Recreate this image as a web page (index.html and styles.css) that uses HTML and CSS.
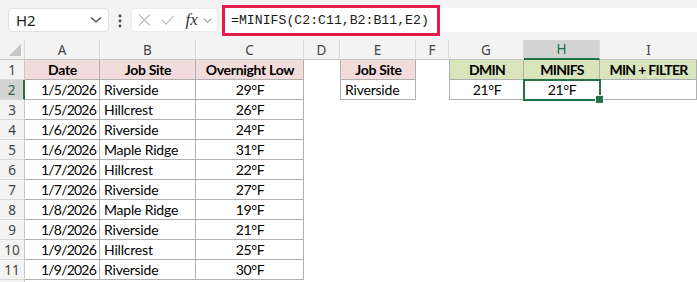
FILE: index.html
```html
<!doctype html>
<html>
    <head>
        <meta charset="utf-8" />
        <title>MINIFS</title>
        <link rel="stylesheet" href="styles.css">
    </head>
    <body>
        <div id="toolbar">
            <div class="namebox">
                <span>H2</span>
                <svg width="12" height="8" viewBox="0 0 12 8"><path d="M1 1.5 L6 6 L11 1.5" fill="none" stroke="#444" stroke-width="1.3"/></svg>
            </div>
            <div class="dots">
                <svg width="4" height="14" viewBox="0 0 4 14"><circle cx="2" cy="2" r="1.4" fill="#444"/><circle cx="2" cy="7" r="1.4" fill="#444"/><circle cx="2" cy="12" r="1.4" fill="#444"/></svg>
            </div>
            <div class="fxbox">
                <svg width="14" height="14" viewBox="0 0 14 14"><path d="M1 1 L13 13 M13 1 L1 13" stroke="#bdbdbd" stroke-width="1.3"/></svg>
                <svg width="15" height="12" viewBox="0 0 15 12"><path d="M1 6 L5.5 10.5 L14 1.5" fill="none" stroke="#bdbdbd" stroke-width="1.3"/></svg>
                <span class="fx">fx</span>
                <svg width="10" height="7" viewBox="0 0 10 7"><path d="M1 1.5 L5 5.5 L9 1.5" fill="none" stroke="#999" stroke-width="1.2"/></svg>
            </div>
            <div class="formula">
                <div class="formula-input">=MINIFS(C2:C11,B2:B11,E2)</div>
                <div class="formula-rest"></div>
            </div>
        </div>

        <div id="sheet">
            <div class="ch corner"></div>
            <div class="ch">A</div>
            <div class="ch">B</div>
            <div class="ch">C</div>
            <div class="ch">D</div>
            <div class="ch">E</div>
            <div class="ch">F</div>
            <div class="ch">G</div>
            <div class="ch sel">H</div>
            <div class="ch last">I</div>

            <div class="rh">1</div>
            <div class="c bd hd pink">Date</div>
            <div class="c bd hd pink">Job Site</div>
            <div class="c bd hd pink">Overnight Low</div>
            <div class="c"></div>
            <div class="c bd bl hd pink">Job Site</div>
            <div class="c"></div>
            <div class="c bd bl hd caps green">DMIN</div>
            <div class="c bd hd caps green">MINIFS</div>
            <div class="c bd hd caps green">MIN + FILTER</div>

            <div class="rh sel">2</div>
            <div class="c bd r">1/5/2026</div>
            <div class="c bd">Riverside</div>
            <div class="c bd m">29°F</div>
            <div class="c"></div>
            <div class="c bd bl">Riverside</div>
            <div class="c"></div>
            <div class="c bd bl m">21°F</div>
            <div class="c bd m active">21°F</div>
            <div class="c bd"></div>

            <div class="rh">3</div>
            <div class="c bd r">1/5/2026</div>
            <div class="c bd">Hillcrest</div>
            <div class="c bd m">26°F</div>
            <div class="c rest"></div>

            <div class="rh">4</div>
            <div class="c bd r">1/6/2026</div>
            <div class="c bd">Riverside</div>
            <div class="c bd m">24°F</div>
            <div class="c rest"></div>

            <div class="rh">5</div>
            <div class="c bd r">1/6/2026</div>
            <div class="c bd">Maple Ridge</div>
            <div class="c bd m">31°F</div>
            <div class="c rest"></div>

            <div class="rh">6</div>
            <div class="c bd r">1/7/2026</div>
            <div class="c bd">Hillcrest</div>
            <div class="c bd m">22°F</div>
            <div class="c rest"></div>

            <div class="rh">7</div>
            <div class="c bd r">1/7/2026</div>
            <div class="c bd">Riverside</div>
            <div class="c bd m">27°F</div>
            <div class="c rest"></div>

            <div class="rh">8</div>
            <div class="c bd r">1/8/2026</div>
            <div class="c bd">Maple Ridge</div>
            <div class="c bd m">19°F</div>
            <div class="c rest"></div>

            <div class="rh">9</div>
            <div class="c bd r">1/8/2026</div>
            <div class="c bd">Riverside</div>
            <div class="c bd m">21°F</div>
            <div class="c rest"></div>

            <div class="rh">10</div>
            <div class="c bd r">1/9/2026</div>
            <div class="c bd">Hillcrest</div>
            <div class="c bd m">25°F</div>
            <div class="c rest"></div>

            <div class="rh">11</div>
            <div class="c bd r">1/9/2026</div>
            <div class="c bd">Riverside</div>
            <div class="c bd m">30°F</div>
            <div class="c rest"></div>

            <div class="rh"></div>
        </div>
    </body>
</html>
```

FILE: styles.css
```css
* {
    margin: 0;
    padding: 0;
    box-sizing: border-box;
}

html, body {
    width: 100%;
    height: 100%;
    overflow: hidden;
    background: #fff;
}

#toolbar {
    height: 40px;
    background: #f3f3f3;
    display: flex;
    align-items: center;
    padding-left: 8px;
}

.namebox {
    width: 101px;
    height: 24px;
    background: #fff;
    border: 1px solid #e1e1e1;
    border-radius: 4px;
    display: flex;
    align-items: center;
    justify-content: space-between;
    padding: 0 6px 0 7px;
    font-family: "Noto Sans", sans-serif;
    font-size: 15px;
    color: #222;
}

.dots {
    width: 22px;
    display: flex;
    justify-content: center;
    padding-top: 1px;
}

.fxbox {
    width: 87px;
    height: 24px;
    background: #fff;
    border: 1px solid #ececec;
    border-radius: 4px;
    display: flex;
    align-items: center;
    padding: 0 5px 0 6px;
    gap: 10px;
}

.fxbox .fx {
    font-family: "Liberation Serif", serif;
    font-style: italic;
    font-size: 17px;
    color: #333;
    margin-left: 1px;
    margin-right: -5px;
}

.formula {
    flex: 1;
    display: flex;
    align-items: center;
    margin-left: 4px;
}

.formula-input {
    width: 218px;
    height: 31px;
    border: 3px solid #e31c4b;
    background: #fff;
    padding-left: 6px;
    font-family: "Liberation Mono", monospace;
    font-size: 13.2px;
    line-height: 25px;
    color: #1a1a1a;
    white-space: nowrap;
}

.formula-rest {
    flex: 1;
    height: 24px;
    background: #fff;
}

#sheet {
    display: grid;
    grid-template-columns: 25px 75px 96px 108px 36px 76px 33px 75px 76px 1fr;
    grid-auto-rows: 20px;
    height: 242px;
    overflow: hidden;
}

.ch, .rh {
    background: #f3f3f3;
    font-family: "Noto Sans", sans-serif;
    font-size: 13.5px;
    color: #444;
    display: flex;
    align-items: center;
    justify-content: center;
}

.ch {
    border-right: 1px solid #d9d9d9;
    border-bottom: 1px solid #c7c7c7;
}

.ch.last {
    border-right: none;
}

.corner {
    position: relative;
}

.corner::after {
    content: "";
    position: absolute;
    right: 3px;
    bottom: 3px;
    border-left: 12px solid transparent;
    border-bottom: 12px solid #c6c6c6;
}

.rh {
    grid-column: 1;
    border-right: 1px solid #c7c7c7;
    border-bottom: 1px solid #d9d9d9;
}

.ch.sel {
    background: #d3d3d3;
    color: #1e6b41;
    border-bottom: 2px solid #217346;
}

.rh.sel {
    background: #d3d3d3;
    color: #1e6b41;
    border-right: 2px solid #217346;
}

.c {
    font-family: Lato, sans-serif;
    font-size: 14px;
    letter-spacing: -0.2px;
    color: #000;
    display: flex;
    align-items: center;
    padding: 0 3px 0 4px;
    white-space: nowrap;
    overflow: hidden;
}

.c.rest {
    grid-column: 5 / -1;
}

.bd {
    border-right: 1px solid #b0b0b0;
    border-bottom: 1px solid #b0b0b0;
}

.bl {
    border-left: 1px solid #b0b0b0;
}

.hd {
    font-weight: bold;
    letter-spacing: -0.3px;
    justify-content: center;
}

.hd.caps {
    letter-spacing: -0.7px;
}

.r {
    justify-content: flex-end;
    letter-spacing: -0.8px;
    padding-right: 3px;
}

.m {
    justify-content: center;
    letter-spacing: -0.4px;
}

.pink {
    background: #f2dcdb;
}

.green {
    background: #d8e4bc;
}

.active {
    position: relative;
    overflow: visible;
}

.active::before {
    content: "";
    position: absolute;
    top: -1px;
    left: -1px;
    right: -2px;
    bottom: -2px;
    border: 2px solid #217346;
    z-index: 1;
}

.active::after {
    content: "";
    position: absolute;
    right: -5px;
    bottom: -5px;
    width: 7px;
    height: 7px;
    background: #217346;
    border: 1px solid #fff;
    z-index: 2;
}
```
